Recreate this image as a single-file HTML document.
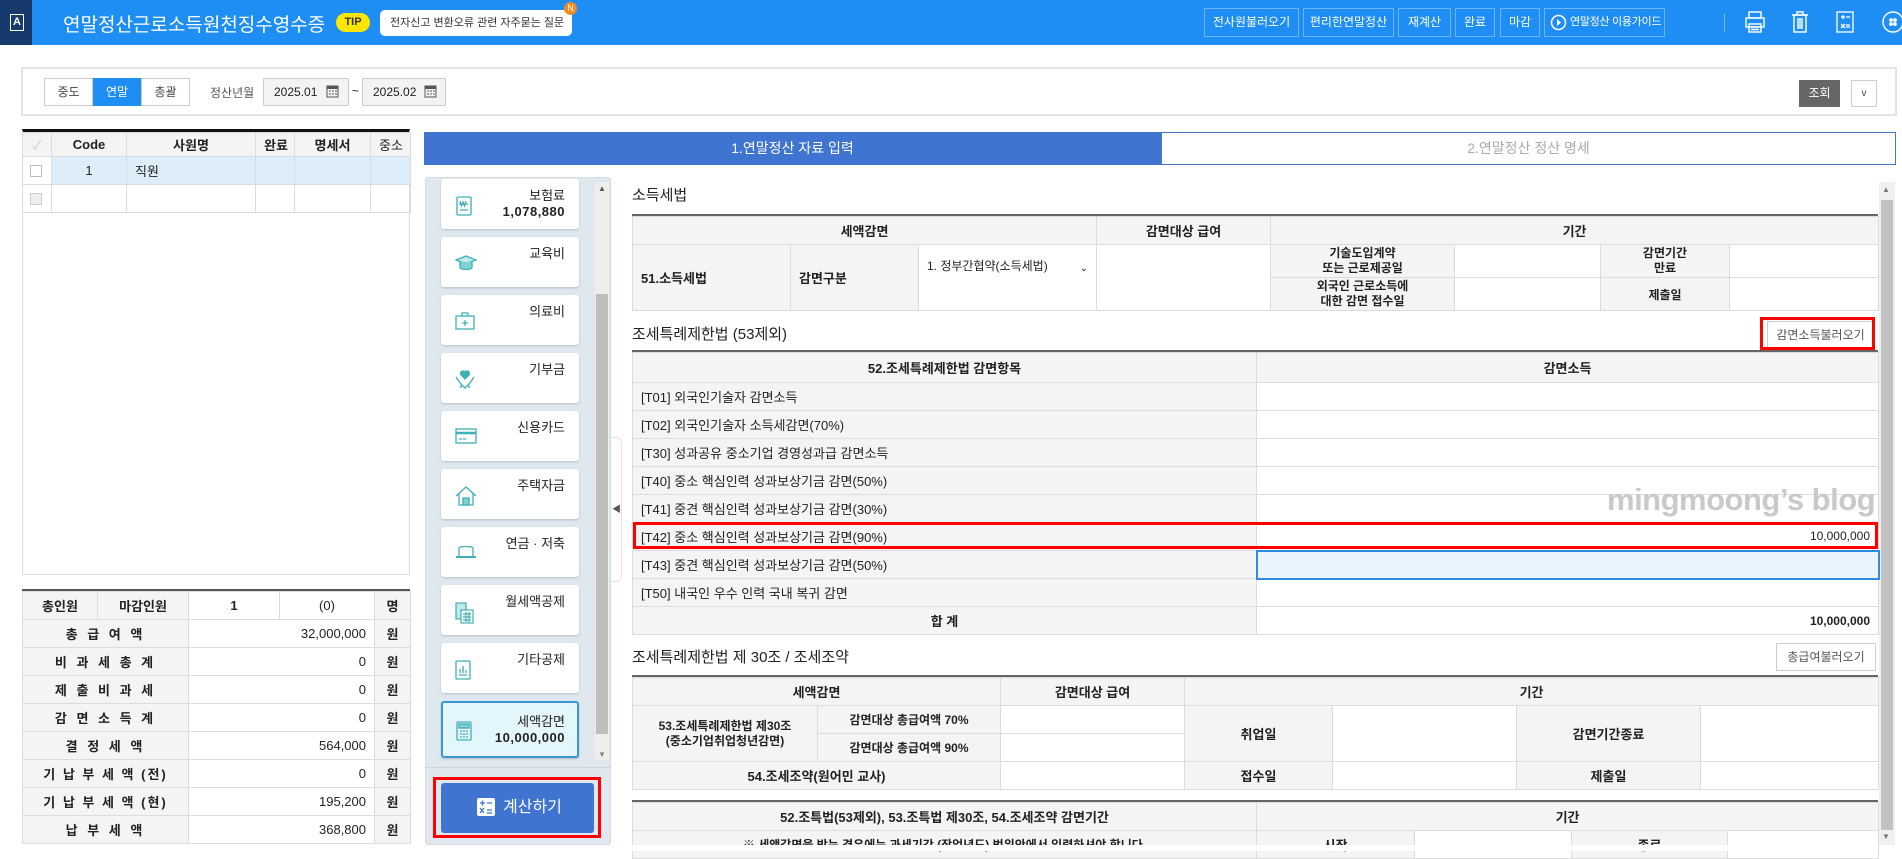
<!DOCTYPE html>
<html><head><meta charset="utf-8">
<style>
*{box-sizing:border-box;margin:0;padding:0}
body{width:1902px;height:851px;overflow:hidden;background:#fff;font-family:"Liberation Sans","Noto Sans CJK KR",sans-serif;font-size:13px;color:#222;position:relative}
.abs{position:absolute}
.hdr{left:0;top:0;width:1902px;height:45px;background:#1e8ef5}
.hb{position:absolute;top:8px;height:29px;border:1px solid rgba(255,255,255,.35);color:#fff;font-size:12px;line-height:27px;text-align:center;white-space:nowrap;overflow:hidden}
table{border-collapse:collapse;table-layout:fixed;position:absolute}
td{border:1px solid #dcdcdc;font-size:13px;padding:0 8px;overflow:hidden;white-space:nowrap}
.th{background:#f4f4f4;font-weight:bold;text-align:center}
.lb{background:#f4f4f4}
.r{text-align:right}
.c{text-align:center}
.card{position:absolute;left:441px;width:138px;height:50px;background:#fff;border-radius:3px;box-shadow:0 1px 2px rgba(0,0,0,.18)}
.card .t{position:absolute;right:14px;top:9px;font-size:13px;text-align:right;line-height:16px}
.card .t b{font-size:13px;letter-spacing:.5px}
.card svg{position:absolute;left:14px;top:17px}
.title{position:absolute;font-size:15px;color:#222}
.btn{position:absolute;border:1px solid #ccc;background:#fff;font-size:12px;color:#555;text-align:center}
</style></head><body>

<div class="abs hdr"></div>
<div class="abs" style="left:0;top:0;width:32px;height:45px;background:#173a6c"></div>
<div class="abs" style="left:10px;top:14px;width:14px;height:17px;border:1.5px solid #fff;color:#fff;font-size:11px;line-height:14px;text-align:center;font-weight:bold">A</div>
<div class="abs" style="left:63px;top:10px;color:#fff;font-size:19px">연말정산근로소득원천징수영수증</div>
<div class="abs" style="left:336px;top:13px;width:34px;height:19px;border-radius:10px;background:#ffe600;color:#333;font-size:11px;font-weight:bold;line-height:19px;text-align:center">TIP</div>
<div class="abs" style="left:380px;top:10px;width:192px;height:26px;border-radius:5px;background:#fff;font-size:11px;line-height:26px;padding-left:10px;color:#333">전자신고 변환오류 관련 자주묻는 질문</div>
<div class="abs" style="left:564px;top:2px;width:13px;height:13px;border-radius:7px;background:#f58a1f;color:#fff;font-size:9px;line-height:13px;text-align:center">N</div>

<div class="hb" style="left:1204px;width:95px">전사원불러오기</div>
<div class="hb" style="left:1303px;width:91px">편리한연말정산</div>
<div class="hb" style="left:1398px;width:53px">재계산</div>
<div class="hb" style="left:1455px;width:40px">완료</div>
<div class="hb" style="left:1500px;width:40px">마감</div>
<div class="hb" style="left:1544px;width:121px;text-align:left;padding-left:25px;font-size:11px;letter-spacing:-.3px">연말정산 이용가이드 ›</div>
<svg class="abs" style="left:1550px;top:14px" width="17" height="17"><circle cx="8.5" cy="8.5" r="7" fill="none" stroke="#fff" stroke-width="1.5"/><path d="M7 5l4 3.5-4 3.5z" fill="#fff"/></svg>
<div class="abs" style="left:1724px;top:14px;width:1px;height:18px;background:rgba(255,255,255,.4)"></div>
<svg class="abs" style="left:1744px;top:10px" width="22" height="24" fill="none" stroke="#fff" stroke-width="1.4"><rect x="5" y="2" width="12" height="6"/><rect x="2" y="8" width="18" height="9"/><rect x="5" y="14" width="12" height="8"/><path d="M7 17h8M7 19.5h8"/></svg>
<svg class="abs" style="left:1790px;top:10px" width="20" height="24" fill="none" stroke="#fff" stroke-width="1.4"><path d="M2 5h16M7 5V2h6v3"/><rect x="4" y="5" width="12" height="17"/><path d="M8 8v11M10 8v11M12 8v11"/></svg>
<svg class="abs" style="left:1836px;top:11px" width="18" height="22" fill="none" stroke="#fff" stroke-width="1.3"><rect x="1" y="1" width="16" height="20"/><path d="M5 6h4M7 4v4M10 6h4M5 13l4 4M9 13l-4 4M10 14h4M10 16h4"/></svg>
<svg class="abs" style="left:1881px;top:10px" width="22" height="24" fill="none" stroke="#fff" stroke-width="1.4"><circle cx="12" cy="12" r="10"/><circle cx="10" cy="10" r="1.2" fill="#fff"/><circle cx="14" cy="10" r="1.2" fill="#fff"/><circle cx="10" cy="14" r="1.2" fill="#fff"/><circle cx="14" cy="14" r="1.2" fill="#fff"/></svg>

<!-- search bar -->
<div class="abs" style="left:21px;top:67px;width:1876px;height:49px;border:2px solid #e3e3e3"></div>
<div class="abs" style="left:44px;top:78px;width:49px;height:28px;border:1px solid #ccc;font-size:12px;line-height:26px;text-align:center;color:#444">중도</div>
<div class="abs" style="left:93px;top:78px;width:48px;height:28px;background:#1e8ef5;font-size:12px;line-height:28px;text-align:center;color:#fff">연말</div>
<div class="abs" style="left:141px;top:78px;width:49px;height:28px;border:1px solid #ccc;font-size:12px;line-height:26px;text-align:center;color:#444">총괄</div>
<div class="abs" style="left:210px;top:84px;font-size:12px;color:#555">정산년월</div>
<div class="abs" style="left:263px;top:78px;width:86px;height:28px;border:1px solid #ccc;background:#f3f3f3;font-size:12px;line-height:26px;padding-left:10px">2025.01</div>
<div class="abs" style="left:352px;top:84px;font-size:12px">~</div>
<div class="abs" style="left:362px;top:78px;width:84px;height:28px;border:1px solid #ccc;background:#f3f3f3;font-size:12px;line-height:26px;padding-left:10px">2025.02</div>
<svg class="abs" style="left:326px;top:84px" width="13" height="14"><rect x="1" y="2" width="11" height="11" fill="none" stroke="#555"/><rect x="1" y="2" width="11" height="3" fill="#555"/><path d="M3 7h2M6 7h2M9 7h2M3 10h2M6 10h2M9 10h2" stroke="#555"/></svg>
<svg class="abs" style="left:424px;top:84px" width="13" height="14"><rect x="1" y="2" width="11" height="11" fill="none" stroke="#555"/><rect x="1" y="2" width="11" height="3" fill="#555"/><path d="M3 7h2M6 7h2M9 7h2M3 10h2M6 10h2M9 10h2" stroke="#555"/></svg>
<div class="abs" style="left:1799px;top:80px;width:41px;height:27px;background:#666;color:#fff;font-size:12px;line-height:27px;text-align:center">조회</div>
<div class="abs" style="left:1851px;top:80px;width:26px;height:27px;border:1px solid #ccc;font-size:10px;line-height:25px;text-align:center;color:#444">v</div>

<!-- left grid -->
<div class="abs" style="left:22px;top:129px;width:388px;height:446px;border:1px solid #ddd;border-top:3px solid #111"></div>
<table style="left:22px;top:132px;width:388px">
<colgroup><col style="width:29px"><col style="width:75px"><col style="width:129px"><col style="width:39px"><col style="width:76px"><col style="width:40px"></colgroup>
<tr style="height:24px"><td class="th" style="color:#ccc;font-weight:normal">✓</td><td class="th">Code</td><td class="th">사원명</td><td class="th">완료</td><td class="th">명세서</td><td class="th" style="font-weight:normal">중소</td></tr>
<tr style="height:28px;background:#ddeefa"><td style="background:#fff;padding:0 7px"><div style="width:12px;height:12px;border:1px solid #bbb;background:#fff"></div></td><td class="c">1</td><td>직원</td><td></td><td></td><td></td></tr>
<tr style="height:28px"><td style="padding:0 7px"><div style="width:12px;height:12px;border:1px solid #ccc;background:#eee"></div></td><td></td><td></td><td></td><td></td><td></td></tr>
</table>

<!-- summary table -->
<div class="abs" style="left:22px;top:589px;width:388px;height:2px;background:#555"></div>
<table style="left:22px;top:591px;width:388px">
<colgroup><col style="width:75px"><col style="width:91px"><col style="width:91px"><col style="width:95px"><col style="width:36px"></colgroup>
<tr style="height:28px"><td class="lb c" style="font-weight:bold">총인원</td><td class="lb c" style="font-weight:bold">마감인원</td><td class="c" style="font-weight:bold">1</td><td class="c">(0)</td><td class="lb c" style="font-weight:bold">명</td></tr>
<tr style="height:28px"><td colspan="2" class="lb c" style="font-weight:bold;letter-spacing:3px">총 급 여 액</td><td colspan="2" class="r">32,000,000</td><td class="lb c" style="font-weight:bold">원</td></tr>
<tr style="height:28px"><td colspan="2" class="lb c" style="font-weight:bold;letter-spacing:3px">비 과 세 총 계</td><td colspan="2" class="r">0</td><td class="lb c" style="font-weight:bold">원</td></tr>
<tr style="height:28px"><td colspan="2" class="lb c" style="font-weight:bold;letter-spacing:3px">제 출 비 과 세</td><td colspan="2" class="r">0</td><td class="lb c" style="font-weight:bold">원</td></tr>
<tr style="height:28px"><td colspan="2" class="lb c" style="font-weight:bold;letter-spacing:3px">감 면 소 득 계</td><td colspan="2" class="r">0</td><td class="lb c" style="font-weight:bold">원</td></tr>
<tr style="height:28px"><td colspan="2" class="lb c" style="font-weight:bold;letter-spacing:3px">결 정 세 액</td><td colspan="2" class="r">564,000</td><td class="lb c" style="font-weight:bold">원</td></tr>
<tr style="height:28px"><td colspan="2" class="lb c" style="font-weight:bold;letter-spacing:2px">기 납 부 세 액 (전)</td><td colspan="2" class="r">0</td><td class="lb c" style="font-weight:bold">원</td></tr>
<tr style="height:28px"><td colspan="2" class="lb c" style="font-weight:bold;letter-spacing:2px">기 납 부 세 액 (현)</td><td colspan="2" class="r">195,200</td><td class="lb c" style="font-weight:bold">원</td></tr>
<tr style="height:28px"><td colspan="2" class="lb c" style="font-weight:bold;letter-spacing:3px">납 부 세 액</td><td colspan="2" class="r">368,800</td><td class="lb c" style="font-weight:bold">원</td></tr>
</table>

<!-- tabs -->
<div class="abs" style="left:424px;top:132px;width:737px;height:33px;background:#3f74d1;color:#fff;font-size:14px;line-height:33px;text-align:center">1.연말정산 자료 입력</div>
<div class="abs" style="left:1161px;top:132px;width:735px;height:33px;border:1px solid #4a76c8;color:#aaa;font-size:14px;line-height:31px;text-align:center">2.연말정산 정산 명세</div>

<!-- side menu -->
<div class="abs" style="left:425px;top:177px;width:186px;height:668px;background:#dfe7ef;border:1px solid #d4dbe3;border-radius:3px"></div>
<div class="abs" style="left:595px;top:182px;width:14px;height:578px;background:#eee"></div>
<div class="abs" style="left:596px;top:294px;width:12px;height:440px;background:#bdbdbd"></div>
<div class="abs" style="left:598px;top:184px;font-size:8px;color:#555">▲</div>
<div class="abs" style="left:598px;top:750px;font-size:8px;color:#888">▼</div>
<div class="abs" style="left:425px;top:767px;width:186px;height:1px;background:#ccd4dc"></div>

<div class="card" style="top:179px"><svg width="18" height="20" fill="none" stroke="#3fb0b5" stroke-width="1.3"><rect x="2" y="1" width="14" height="18" rx="1"/><path d="M5 5l1.5 5L8 6l1.5 4L11 5M4 8h9M5 14h8"/></svg><div class="t">보험료<br><b>1,078,880</b></div></div>
<div class="card" style="top:237px"><svg width="22" height="18" fill="none" stroke="#3fb0b5" stroke-width="1.3"><path d="M1 6l10-4 10 4-10 4z" fill="#bfe9ea"/><path d="M5 8v6c3 2 9 2 12 0V8" fill="#7fd1d3"/></svg><div class="t">교육비</div></div>
<div class="card" style="top:295px"><svg width="20" height="18" fill="none" stroke="#3fb0b5" stroke-width="1.3"><rect x="1" y="4" width="18" height="13"/><path d="M7 4V1h6v3M10 8v6M7 11h6"/></svg><div class="t">의료비</div></div>
<div class="card" style="top:353px"><svg width="20" height="20" fill="none" stroke="#3fb0b5" stroke-width="1.3"><path d="M10 9L6 5a2.5 2.5 0 014-3 2.5 2.5 0 014 3z" fill="#3fb0b5"/><path d="M1 7l4 6 5 5 5-5 4-6M6 18v-3M14 18v-3"/></svg><div class="t">기부금</div></div>
<div class="card" style="top:411px"><svg width="22" height="16" fill="none" stroke="#3fb0b5" stroke-width="1.3"><rect x="1" y="1" width="20" height="14"/><path d="M1 5h20" stroke-width="2.5"/><path d="M4 11h3M8 11h3"/></svg><div class="t">신용카드</div></div>
<div class="card" style="top:469px"><svg width="22" height="20" fill="none" stroke="#3fb0b5" stroke-width="1.3"><path d="M1 10L11 1l10 9M4 8v11h14V8"/><rect x="8" y="12" width="6" height="7" fill="#7fd1d3"/></svg><div class="t">주택자금</div></div>
<div class="card" style="top:527px"><svg width="22" height="16" fill="none" stroke="#3fb0b5" stroke-width="1.3"><path d="M4 12V4c0-2 14-2 14 0v8"/><path d="M1 13h20" stroke-width="2"/></svg><div class="t">연금 · 저축</div></div>
<div class="card" style="top:585px"><svg width="20" height="22" fill="none" stroke="#3fb0b5" stroke-width="1.2"><rect x="1" y="1" width="10" height="16" fill="#bfe9ea"/><rect x="6" y="8" width="12" height="13" fill="#fff"/><path d="M8 12h8M8 15h8M8 18h8M11 10v10M14 10v10"/></svg><div class="t">월세액공제</div></div>
<div class="card" style="top:643px"><svg width="16" height="20" fill="none" stroke="#3fb0b5" stroke-width="1.3"><rect x="1" y="1" width="14" height="18" rx="1"/><path d="M5 13V9M8 13V6M11 13V10M4 15h8"/></svg><div class="t">기타공제</div></div>
<div class="card" style="top:701px;height:57px;background:#e2f6fb;border:2px solid #3a97d4"><svg width="16" height="20" fill="none" stroke="#3fb0b5" stroke-width="1.3" style="top:18px;left:13px"><rect x="1" y="1" width="14" height="18" rx="1"/><rect x="3" y="3" width="10" height="4" fill="#7fd1d3"/><path d="M4 10h2M7 10h2M10 10h2M4 13h2M7 13h2M10 13h2M4 16h2M7 16h2M10 16h2"/></svg><div class="t" style="top:11px;right:12px">세액감면<br><b>10,000,000</b></div></div>

<div class="abs" style="left:433px;top:777px;width:168px;height:61px;border:3px solid #f00"></div>
<div class="abs" style="left:441px;top:783px;width:153px;height:50px;background:#3f74d1;border-radius:3px;color:#fff;font-size:16px;line-height:50px;padding-left:62px">계산하기</div>
<svg class="abs" style="left:477px;top:798px" width="18" height="18"><rect width="18" height="18" rx="2" fill="#fff"/><path d="M3 5h5M5.5 2.5v5M10 5h5M3 10l4 5M7 10l-4 5M10 12h5M10 15h5" stroke="#3f74d1" stroke-width="1.3"/></svg>

<div class="abs" style="left:611px;top:437px;width:11px;height:145px;border:1px solid #e3e3e3;border-left:none;border-radius:0 6px 6px 0;background:#fff"></div>
<div class="abs" style="left:612px;top:502px;font-size:9px;color:#555">◀</div>

<!-- right scrollbar -->
<div class="abs" style="left:1879px;top:182px;width:16px;height:663px;background:#f0f0f0"></div>
<div class="abs" style="left:1881px;top:200px;width:12px;height:630px;background:#c2c2c2"></div>
<div class="abs" style="left:1882px;top:185px;font-size:8px;color:#777">▲</div>
<div class="abs" style="left:1882px;top:832px;font-size:8px;color:#777">▼</div>

<!-- section 1 -->
<div class="title" style="left:632px;top:184px">소득세법</div>
<div class="abs" style="left:632px;top:214px;width:1246px;height:2px;background:#666"></div>
<table style="left:632px;top:216px;width:1246px">
<colgroup><col style="width:158px"><col style="width:128px"><col style="width:178px"><col style="width:174px"><col style="width:184px"><col style="width:146px"><col style="width:129px"><col style="width:149px"></colgroup>
<tr style="height:28px"><td colspan="3" class="th">세액감면</td><td class="th">감면대상 급여</td><td colspan="4" class="th">기간</td></tr>
<tr style="height:33px"><td rowspan="2" class="lb" style="font-weight:bold">51.소득세법</td><td rowspan="2" class="lb" style="font-weight:bold">감면구분</td><td rowspan="2" style="vertical-align:top;padding-top:12px;font-size:12px">1. 정부간협약(소득세법)<span style="float:right;font-size:10px;margin-top:6px">⌄</span></td><td rowspan="2"></td><td class="th" style="font-size:12px;line-height:15px">기술도입계약<br>또는 근로제공일</td><td></td><td class="th" style="font-size:12px;line-height:15px">감면기간<br>만료</td><td></td></tr>
<tr style="height:33px"><td class="th" style="font-size:12px;line-height:15px">외국인 근로소득에<br>대한 감면 접수일</td><td></td><td class="th" style="font-size:12px">제출일</td><td></td></tr>
</table>

<!-- section 2 -->
<div class="title" style="left:632px;top:323px">조세특례제한법 (53제외)</div>
<div class="btn" style="left:1767px;top:321px;width:107px;height:29px;line-height:27px">감면소득불러오기</div>
<div class="abs" style="left:1760px;top:317px;width:115px;height:33px;border:3px solid #f00"></div>
<div class="abs" style="left:632px;top:350px;width:1246px;height:2px;background:#666"></div>
<table style="left:632px;top:352px;width:1246px">
<colgroup><col style="width:624px"><col style="width:622px"></colgroup>
<tr style="height:30px"><td class="th">52.조세특례제한법 감면항목</td><td class="th">감면소득</td></tr>
<tr style="height:28px"><td class="lb">[T01] 외국인기술자 감면소득</td><td></td></tr>
<tr style="height:28px"><td class="lb">[T02] 외국인기술자 소득세감면(70%)</td><td></td></tr>
<tr style="height:28px"><td class="lb">[T30] 성과공유 중소기업 경영성과급 감면소득</td><td></td></tr>
<tr style="height:28px"><td class="lb">[T40] 중소 핵심인력 성과보상기금 감면(50%)</td><td></td></tr>
<tr style="height:28px"><td class="lb">[T41] 중견 핵심인력 성과보상기금 감면(30%)</td><td></td></tr>
<tr style="height:28px"><td class="lb">[T42] 중소 핵심인력 성과보상기금 감면(90%)</td><td class="r" style="font-size:12px">10,000,000</td></tr>
<tr style="height:28px"><td class="lb">[T43] 중견 핵심인력 성과보상기금 감면(50%)</td><td style="background:#eaf4fc;border:2px solid #2f8ae0"></td></tr>
<tr style="height:28px"><td class="lb">[T50] 내국인 우수 인력 국내 복귀 감면</td><td></td></tr>
<tr style="height:28px"><td class="lb c" style="font-weight:bold">합 계</td><td class="r" style="font-weight:bold;font-size:12px">10,000,000</td></tr>
</table>
<div class="abs" style="left:633px;top:522px;width:1245px;height:27px;border:3px solid #f00"></div>
<div class="abs" style="left:1607px;top:482px;font-size:31px;font-weight:bold;color:#c9c9c9;letter-spacing:-.5px">mingmoong’s blog</div>

<!-- section 3 -->
<div class="title" style="left:632px;top:646px">조세특례제한법 제 30조 / 조세조약</div>
<div class="btn" style="left:1776px;top:643px;width:100px;height:28px;line-height:26px">총급여불러오기</div>
<div class="abs" style="left:632px;top:675px;width:1246px;height:2px;background:#666"></div>
<table style="left:632px;top:677px;width:1246px">
<colgroup><col style="width:185px"><col style="width:183px"><col style="width:184px"><col style="width:148px"><col style="width:184px"><col style="width:184px"><col style="width:178px"></colgroup>
<tr style="height:28px"><td colspan="2" class="th">세액감면</td><td class="th">감면대상 급여</td><td colspan="4" class="th">기간</td></tr>
<tr style="height:28px"><td rowspan="2" class="th" style="font-size:12px;line-height:15px">53.조세특례제한법 제30조<br>(중소기업취업청년감면)</td><td class="th" style="font-size:12px">감면대상 총급여액 70%</td><td></td><td rowspan="2" class="th">취업일</td><td rowspan="2"></td><td rowspan="2" class="th">감면기간종료</td><td rowspan="2"></td></tr>
<tr style="height:28px"><td class="th" style="font-size:12px">감면대상 총급여액 90%</td><td></td></tr>
<tr style="height:28px"><td colspan="2" class="th">54.조세조약(원어민 교사)</td><td></td><td class="th">접수일</td><td></td><td class="th">제출일</td><td></td></tr>
</table>

<div class="abs" style="left:632px;top:800px;width:1246px;height:2px;background:#666"></div>
<table style="left:632px;top:802px;width:1246px">
<colgroup><col style="width:624px"><col style="width:158px"><col style="width:157px"><col style="width:156px"><col style="width:151px"></colgroup>
<tr style="height:28px"><td class="th">52.조특법(53제외), 53.조특법 제30조, 54.조세조약 감면기간</td><td colspan="4" class="th">기간</td></tr>
<tr style="height:28px"><td class="th" style="font-size:12px">※ 세액감면을 받는 경우에는 과세기간 (작업년도) 범위안에서 입력하셔야 합니다.</td><td class="th">시작</td><td></td><td class="th">종료</td><td></td></tr>
</table>
<div class="abs" style="left:0;top:845px;width:1878px;height:6px;background:#fff"></div>
</body></html>
